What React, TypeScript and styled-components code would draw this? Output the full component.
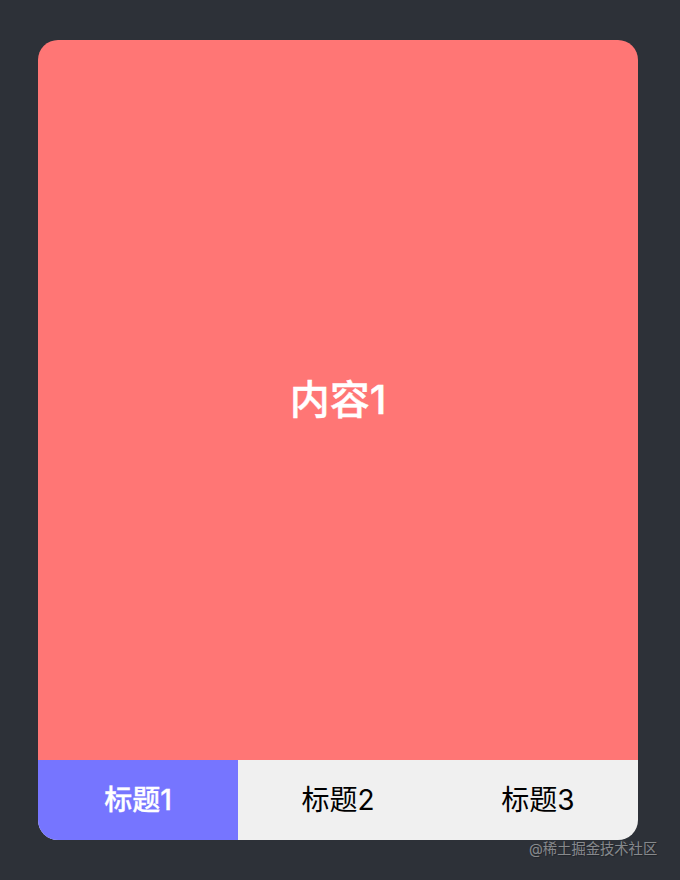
import React, { useState } from "react";
import styled, { createGlobalStyle } from "styled-components";

const Global = createGlobalStyle`
  html, body { margin: 0; padding: 0; background: #2d3138; }
  body { font-family: "Inter", "Noto Sans CJK SC", sans-serif; }
`;

const Stage = styled.div`
  position: relative;
  width: 680px;
  height: 880px;
  box-sizing: border-box;
  padding: 40px 42px 40px 38px;
  background: #2d3138;
  overflow: hidden;
`;

const Card = styled.div`
  width: 600px;
  height: 800px;
  border-radius: 20px;
  overflow: hidden;
  display: flex;
  flex-direction: column;
`;

const Panel = styled.div`
  flex: 1;
  display: flex;
  align-items: center;
  justify-content: center;
  background: #ff7675;
  color: #fff;
  font-size: 40px;
  line-height: 40px;
  font-weight: 500;
  -webkit-text-stroke: 0.4px #fff;
`;

const TabBar = styled.div`
  height: 80px;
  display: grid;
  grid-template-columns: repeat(3, 1fr);
  background: #f0f0f0;
`;

const Tab = styled.button<{ $active: boolean }>`
  border: 0;
  padding: 0;
  font: inherit;
  font-size: 28px;
  line-height: 28px;
  font-weight: ${(p) => (p.$active ? 500 : 400)};
  -webkit-text-stroke: ${(p) => (p.$active ? "0.3px #fff" : "0")};
  color: ${(p) => (p.$active ? "#fff" : "#000")};
  background: ${(p) => (p.$active ? "#7675ff" : "transparent")};
  cursor: pointer;
`;

const Watermark = styled.div`
  position: absolute;
  left: 529px;
  top: 839px;
  font-size: 14.3px;
  line-height: 20px;
  white-space: nowrap;
  color: rgba(255, 255, 255, 0.45);
  text-shadow: 1px 1px 1px rgba(0, 0, 0, 0.25);
`;

const titles = ["标题1", "标题2", "标题3"];

export default function App() {
  const [active, setActive] = useState(0);
  return (
    <>
      <Global />
      <Stage>
        <Card>
          <Panel>内容{active + 1}</Panel>
          <TabBar>
            {titles.map((t, i) => (
              <Tab key={t} $active={i === active} onClick={() => setActive(i)}>
                {t}
              </Tab>
            ))}
          </TabBar>
        </Card>
        <Watermark>@稀土掘金技术社区</Watermark>
      </Stage>
    </>
  );
}
